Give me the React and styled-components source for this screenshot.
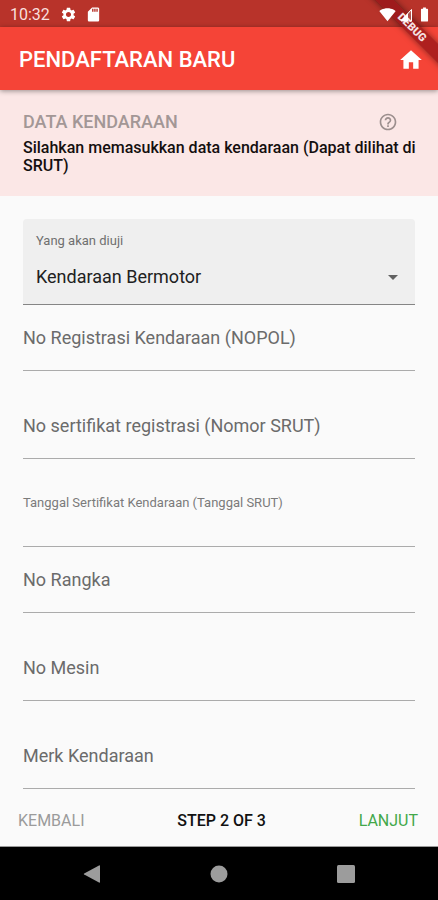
import { useState } from "react";
import styled, { createGlobalStyle } from "styled-components";
import {
  MdBatteryFull,
  MdHelpOutline,
  MdHome,
  MdSdCard,
  MdSettings,
  MdSignalWifi4Bar,
} from "react-icons/md";

const GlobalStyle = createGlobalStyle`
  *, *::before, *::after {
    box-sizing: border-box;
  }
  body {
    margin: 0;
    background: #fafafa;
    font-family: Roboto, "Liberation Sans", sans-serif;
  }
  button, input, select {
    font-family: inherit;
    margin: 0;
  }
`;

const Screen = styled.div`
  position: relative;
  display: flex;
  flex-direction: column;
  min-height: 100vh;
  overflow: hidden;
`;

const StatusBar = styled.div`
  display: flex;
  justify-content: space-between;
  align-items: center;
  height: 27px;
  padding: 2px 5px 0 10px;
  background: #b8332a;
  color: #ffffff;
`;

const StatusGroup = styled.div`
  display: flex;
  align-items: center;
  gap: ${({ $gap }) => $gap};
  /* system icons stay above the debug ribbon */
  position: relative;
  z-index: 3;
`;

const Clock = styled.span`
  font-size: 16px;
  line-height: 20px;
  color: #f9dfdd;
`;

const AppBar = styled.header`
  display: flex;
  justify-content: space-between;
  align-items: center;
  height: 63px;
  padding: 2px 14px 0 19px;
  background: #f54437;
  color: #ffffff;
  box-shadow: 0 1px 5px rgba(0, 0, 0, 0.4);
  z-index: 1;
`;

const Title = styled.h1`
  margin: 0;
  font-size: 22px;
  line-height: 28px;
  font-weight: 500;
`;

const IconBtn = styled.button`
  display: flex;
  padding: 0;
  border: 0;
  background: none;
  color: ${({ $color }) => $color || "inherit"};
  cursor: pointer;
`;

const RibbonClip = styled.div`
  position: absolute;
  top: 0;
  right: 0;
  width: 80px;
  height: 80px;
  overflow: hidden;
  pointer-events: none;
  z-index: 2;
`;

const Ribbon = styled.span`
  position: absolute;
  top: 21px;
  right: -34px;
  width: 120px;
  height: 13px;
  background: rgba(150, 20, 24, 0.75);
  box-shadow: 0 0 6px rgba(0, 0, 0, 0.5);
  color: #f6e2e2;
  font-size: 11px;
  line-height: 13px;
  font-weight: 900;
  text-align: center;
  transform: rotate(45deg);
`;

const Banner = styled.section`
  padding: 18px 23px 21px;
  background: #fbe7e6;
`;

const BannerHead = styled.div`
  display: flex;
  justify-content: space-between;
  align-items: center;
  padding-right: 17px;
`;

const BannerTitle = styled.h2`
  margin: 0;
  font-size: 18px;
  line-height: 28px;
  font-weight: 500;
  color: #a39796;
`;

const BannerText = styled.p`
  margin: 3px -15px 0 0;
  font-size: 16px;
  line-height: 18px;
  font-weight: 500;
  color: #140f0f;
`;

const Form = styled.form`
  flex: 1;
  display: flex;
  flex-direction: column;
`;

const Fields = styled.div`
  flex: 1;
  display: flex;
  flex-direction: column;
  padding: 23px 23px 0;
`;

const SelectField = styled.div`
  display: grid;
  height: 86px;
  border-bottom: 1px solid #858585;
  border-radius: 4px 4px 0 0;
  background: #efefef;
`;

const SelectLabel = styled.label`
  grid-area: 1 / 1;
  padding: 13px 13px 0;
  font-size: 13px;
  line-height: 17px;
  color: #6f6f6f;
`;

const Select = styled.select`
  grid-area: 1 / 1;
  width: 100%;
  padding: 30px 13px 0;
  border: 0;
  outline: 0;
  appearance: none;
  background: none;
  color: #212121;
  font-size: 18px;
`;

const Arrow = styled.svg`
  grid-area: 1 / 1;
  place-self: center end;
  width: 10px;
  height: 5px;
  margin: 31px 17px 0 0;
  fill: #616161;
  pointer-events: none;
`;

const Field = styled.div`
  display: grid;
  height: 66px;
  margin-bottom: ${({ $tight }) => ($tight ? "0" : "22px")};
  border-bottom: 1px solid #ababab;
`;

const Input = styled.input`
  grid-area: 1 / 1;
  width: 100%;
  padding: 26px 0 0;
  border: 0;
  outline: 0;
  background: none;
  color: #212121;
  font-size: 18px;
`;

const FieldLabel = styled.label`
  grid-area: 1 / 1;
  align-self: ${({ $small }) => ($small ? "start" : "center")};
  padding-top: ${({ $small }) => ($small ? "13px" : "0")};
  font-size: ${({ $small }) => ($small ? "13px" : "18px")};
  line-height: ${({ $small }) => ($small ? "17px" : "22px")};
  color: ${({ $small }) => ($small ? "#7b7b7b" : "#6b6b6b")};
  pointer-events: none;
`;

const Steps = styled.div`
  display: flex;
  justify-content: space-between;
  align-items: center;
  height: 58px;
  padding: 6px 20px 0 18px;
  border-bottom: 1px solid #9a9a9a;
`;

const StepBtn = styled.button`
  padding: 0;
  border: 0;
  background: none;
  font-size: 16px;
  line-height: 20px;
  color: ${({ $color }) => $color};
  cursor: pointer;
`;

const StepText = styled.span`
  font-size: 16px;
  line-height: 20px;
  font-weight: 500;
  color: #111111;
`;

const NavBar = styled.nav`
  display: grid;
  grid-template-columns: repeat(3, 1fr);
  place-items: center;
  height: 53px;
  padding: 0 29px;
  background: #000000;
`;

const NavIcon = styled.svg`
  width: 18px;
  height: 18px;
  fill: #9c9c9c;
`;

const FIELDS = [
  { id: "nopol", label: "No Registrasi Kendaraan (NOPOL)" },
  { id: "srut", label: "No sertifikat registrasi (Nomor SRUT)" },
  {
    id: "tanggal",
    label: "Tanggal Sertifikat Kendaraan (Tanggal SRUT)",
    floating: true,
  },
  { id: "rangka", label: "No Rangka" },
  { id: "mesin", label: "No Mesin" },
  { id: "merk", label: "Merk Kendaraan", last: true },
];

function TextField({ id, label, floating, last }) {
  const [value, setValue] = useState("");
  const [focused, setFocused] = useState(false);

  return (
    <Field $tight={floating || last}>
      <Input
        id={id}
        value={value}
        onChange={(e) => setValue(e.target.value)}
        onFocus={() => setFocused(true)}
        onBlur={() => setFocused(false)}
      />
      <FieldLabel htmlFor={id} $small={floating || focused || value !== ""}>
        {label}
      </FieldLabel>
    </Field>
  );
}

function SignalIcon() {
  return (
    <svg width="14" height="14" viewBox="0 0 14 14" aria-hidden="true">
      <path d="M12.500 1v12H1.500z" fill="#ffffff" fillOpacity="0.2" />
      <path d="M9 5v8H1.500z" fill="#ffffff" />
      <path d="M12.500 1.500V13H2z" fill="none" stroke="#ffffff" />
    </svg>
  );
}

function App() {
  const [type, setType] = useState("Kendaraan Bermotor");

  return (
    <>
      <GlobalStyle />
      <Screen>
        <StatusBar>
          <StatusGroup $gap="10px">
            <Clock>10:32</Clock>
            <StatusGroup $gap="8px">
              <MdSettings size={17} />
              <MdSdCard size={17} />
            </StatusGroup>
          </StatusGroup>
          <StatusGroup $gap="3px">
            <MdSignalWifi4Bar size={17} />
            <SignalIcon />
            <MdBatteryFull size={17} />
          </StatusGroup>
        </StatusBar>
        <RibbonClip>
          <Ribbon>DEBUG</Ribbon>
        </RibbonClip>
        <AppBar>
          <Title>PENDAFTARAN BARU</Title>
          <IconBtn type="button" aria-label="Beranda">
            <MdHome size={26} />
          </IconBtn>
        </AppBar>
        <Banner>
          <BannerHead>
            <BannerTitle>DATA KENDARAAN</BannerTitle>
            <IconBtn type="button" aria-label="Bantuan" $color="#9c8f8e">
              <MdHelpOutline size={20} />
            </IconBtn>
          </BannerHead>
          <BannerText>
            Silahkan memasukkan data kendaraan (Dapat dilihat di SRUT)
          </BannerText>
        </Banner>
        <Form onSubmit={(e) => e.preventDefault()}>
          <Fields>
            <SelectField>
              <SelectLabel htmlFor="type">Yang akan diuji</SelectLabel>
              <Select
                id="type"
                value={type}
                onChange={(e) => setType(e.target.value)}
              >
                <option>Kendaraan Bermotor</option>
              </Select>
              <Arrow viewBox="0 0 10 5" aria-hidden="true">
                <path d="M0 0h10L5 5z" />
              </Arrow>
            </SelectField>
            {FIELDS.map((field) => (
              <TextField key={field.id} {...field} />
            ))}
          </Fields>
          <Steps>
            <StepBtn type="button" $color="#9b9b9b">
              KEMBALI
            </StepBtn>
            <StepText>STEP 2 OF 3</StepText>
            <StepBtn type="submit" $color="#43a84a">
              LANJUT
            </StepBtn>
          </Steps>
        </Form>
        <NavBar>
          <NavIcon viewBox="0 0 18 18" aria-hidden="true">
            <path d="M16 .4Q17 0 17 1v16q0 1-1 .6L1.200 9.600q-1-.6 0-1.200z" />
          </NavIcon>
          <NavIcon viewBox="0 0 18 18" aria-hidden="true">
            <circle cx="9" cy="9" r="8.500" />
          </NavIcon>
          <NavIcon viewBox="0 0 18 18" aria-hidden="true">
            <rect width="18" height="18" rx="1.500" />
          </NavIcon>
        </NavBar>
      </Screen>
    </>
  );
}

export default App;
